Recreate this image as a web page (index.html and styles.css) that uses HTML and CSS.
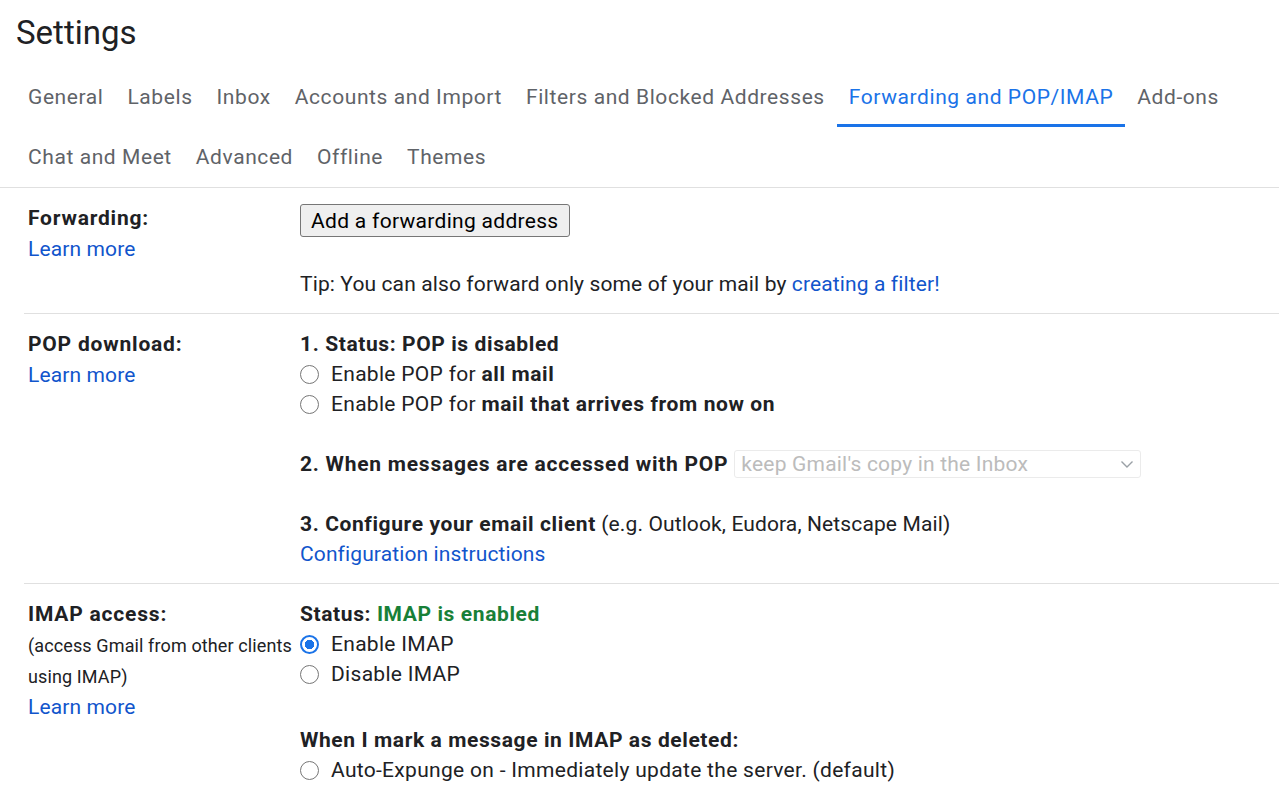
FILE: index.html
```html
<!DOCTYPE html>
<html lang="en">
<head>
<meta charset="utf-8">
<title>Settings</title>
<link rel="stylesheet" href="styles.css">
</head>
<body>
<div class="page">
  <h1 class="title">Settings</h1>
  <nav class="tabs">
    <div class="tab-row">
      <a class="tab">General</a>
      <a class="tab">Labels</a>
      <a class="tab">Inbox</a>
      <a class="tab">Accounts and Import</a>
      <a class="tab">Filters and Blocked Addresses</a>
      <a class="tab active">Forwarding and POP/IMAP</a>
      <a class="tab">Add-ons</a>
    </div>
    <div class="tab-row">
      <a class="tab">Chat and Meet</a>
      <a class="tab">Advanced</a>
      <a class="tab">Offline</a>
      <a class="tab">Themes</a>
    </div>
  </nav>

  <div class="sections">
    <section class="row">
      <div class="label">
        <div class="label-title">Forwarding:</div>
        <a class="link">Learn more</a>
      </div>
      <div class="content">
        <div class="btn-line"><button class="btn" type="button">Add a forwarding address</button></div>
        <p class="tip">Tip: You can also forward only some of your mail by <a class="link">creating a filter!</a></p>
      </div>
    </section>

    <section class="row">
      <div class="label">
        <div class="label-title">POP download:</div>
        <a class="link">Learn more</a>
      </div>
      <div class="content">
        <div class="line heading">1. Status: POP is disabled</div>
        <label class="line opt"><input class="radio" type="radio" name="pop"><span>Enable POP for <b>all mail</b></span></label>
        <label class="line opt"><input class="radio" type="radio" name="pop"><span>Enable POP for <b>mail that arrives from now on</b></span></label>
        <div class="line gap heading-row">
          <span class="heading wide">2. When messages are accessed with POP</span>
          <span class="select-wrap">
            <select class="select" disabled>
              <option>keep Gmail's copy in the Inbox</option>
            </select>
            <svg class="chev" width="14" height="9" viewBox="0 0 14 9"><path d="M1.5 1.5 L7 7 L12.5 1.5" fill="none" stroke="#9aa0a6" stroke-width="1.4"/></svg>
          </span>
        </div>
        <div class="line gap"><span class="heading">3. Configure your email client</span> (e.g. Outlook, Eudora, Netscape Mail)</div>
        <div class="line"><a class="link">Configuration instructions</a></div>
      </div>
    </section>

    <section class="row">
      <div class="label">
        <div class="label-title">IMAP access:</div>
        <div class="small">(access Gmail from other clients<br>using IMAP)</div>
        <a class="link">Learn more</a>
      </div>
      <div class="content">
        <div class="line heading">Status: <span class="green">IMAP is enabled</span></div>
        <label class="line opt"><input class="radio" type="radio" name="imap" checked><span>Enable IMAP</span></label>
        <label class="line opt"><input class="radio" type="radio" name="imap"><span>Disable IMAP</span></label>
        <div class="line gap2 heading">When I mark a message in IMAP as deleted:</div>
        <label class="line opt"><input class="radio" type="radio" name="exp"><span>Auto-Expunge on - Immediately update the server. (default)</span></label>
      </div>
    </section>
  </div>
</div>
</body>
</html>
```
FILE: styles.css
```css
* { box-sizing: border-box; }
html, body { margin: 0; padding: 0; background: #fff; }
body {
  font-family: Roboto, "Liberation Sans", Arial, sans-serif;
  color: #202124;
  font-size: 21px;
  letter-spacing: 0.12px;
  overflow: hidden;
}
.title {
  margin: 0;
  padding: 13px 16px 14px;
  font-size: 33px;
  line-height: 40px;
  font-weight: 400;
  letter-spacing: 0;
  color: #202124;
}
.tabs { padding-left: 16px; }
.tab-row { display: flex; }
.tab {
  display: block;
  height: 60px;
  padding: 0 12px;
  border-top: 3px solid transparent;
  border-bottom: 3px solid transparent;
  line-height: 54px;
  font-size: 21px;
  letter-spacing: 0.58px;
  color: #5f6368;
  white-space: nowrap;
}
.tab.active {
  color: #1a73e8;
  border-bottom-color: #1a73e8;
}
.sections { border-top: 1px solid #e0e0e0; }
.row {
  display: grid;
  grid-template-columns: 272px 1fr;
  margin-left: 24px;
  padding: 15px 0 14px 4px;
  border-bottom: 1px solid #e0e0e0;
}
.label { line-height: 31px; }
.label-title { font-weight: 700; letter-spacing: 0.8px; }
.small { font-size: 18px; line-height: 31px; letter-spacing: 0.12px; }
.link { color: #1155cc; text-decoration: none; cursor: pointer; }
.content { line-height: 30px; }
.btn-line { height: 35px; padding-top: 1px; }
.btn {
  height: 33px;
  padding: 0 10px;
  font-family: Roboto, "Liberation Sans", Arial, sans-serif;
  font-size: 21px;
  letter-spacing: 0.3px;
  color: #000;
  background: #efefef;
  border: 1px solid #767676;
  border-radius: 3px;
}
.tip { margin: 31px 0 0; }
.line { display: block; }
.heading { font-weight: 700; letter-spacing: 0.6px; }
.heading.wide { letter-spacing: 0.75px; }
.opt { display: flex; align-items: center; letter-spacing: 0.3px; }
.opt b { font-weight: 700; letter-spacing: 0.6px; }
.radio {
  appearance: none;
  -webkit-appearance: none;
  width: 19px;
  height: 19px;
  margin: 0 12px 0 0;
  border: 1.5px solid #767676;
  border-radius: 50%;
  background: #fff;
  flex: none;
}
.radio:checked {
  border: 2px solid #1a73e8;
  background: radial-gradient(circle, #1a73e8 0 4.5px, #fff 5px);
}
.gap { margin-top: 30px; }
.gap2 { margin-top: 36px; }
.heading-row { display: flex; align-items: center; }
.select-wrap { position: relative; display: inline-block; margin-left: 6px; }
.select {
  appearance: none;
  -webkit-appearance: none;
  width: 407px;
  height: 28px;
  padding: 0 6px;
  font-family: Roboto, "Liberation Sans", Arial, sans-serif;
  font-size: 21px;
  letter-spacing: 0.2px;
  color: #a0a0a0;
  background: #fff;
  border: 1px solid #e3e3e3;
  border-radius: 3px;
  display: block;
}
.chev { position: absolute; right: 7px; top: 10px; }
.green { color: #188038; }
```
